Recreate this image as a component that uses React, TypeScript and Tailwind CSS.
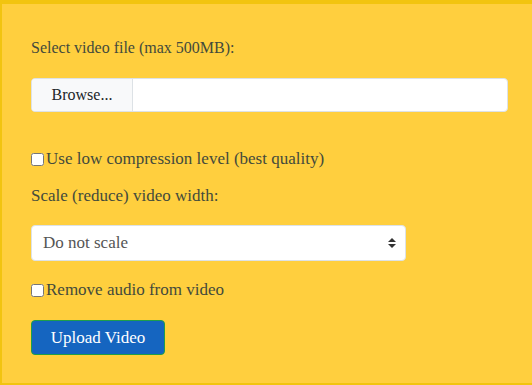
import React from "react";

export default function App() {
  const font = { fontFamily: '"Liberation Serif", "DejaVu Serif", serif' };
  return (
    <div
      className="w-[532px] h-[385px] bg-[#ffcf3e] border-t-4 border-l-2 border-b-2 border-[#f2c40f] pl-[29px] pr-[24px] text-[#434a3c] flex flex-col"
      style={font}
    >
      <div className="mt-[32px] h-[24px] leading-[24px] text-[16px]">Select video file (max 500MB):</div>
      <div className="mt-[18px] h-[34px] flex bg-white border border-[#dde2e6] rounded-[4px] overflow-hidden">
        <div className="w-[101px] h-full bg-[#f8f9fa] border-r border-[#dde2e6] flex items-center justify-center text-[16px] text-[#212529]">
          Browse...
        </div>
        <div className="flex-1" />
      </div>
      <label className="mt-[35px] h-[24px] flex items-center gap-[2px] text-[17px]">
        <input type="checkbox" className="w-[13px] h-[13px] m-0" />
        <span>Use low compression level (best quality)</span>
      </label>
      <div className="mt-[13px] h-[24px] leading-[24px] text-[17px]">Scale (reduce) video width:</div>
      <div className="mt-[17px] w-[375px] h-[36px] bg-white border border-[#dde2e6] rounded-[4px] flex items-center justify-between pl-[11px] pr-[9px] text-[17px] text-[#555]">
        <span>Do not scale</span>
        <svg width="8" height="10" viewBox="0 0 8 10">
          <path d="M4 0 L8 4 H0 Z" fill="#333" />
          <path d="M4 10 L8 6 H0 Z" fill="#333" />
        </svg>
      </div>
      <label className="mt-[17px] h-[24px] flex items-center gap-[2px] text-[17px]">
        <input type="checkbox" className="w-[13px] h-[13px] m-0" />
        <span>Remove audio from video</span>
      </label>
      <div className="mt-[18px]">
        <button className="w-[134px] h-[35px] bg-[#1565c0] border border-[#1e9e4a] rounded-[4px] text-white text-[17px]" style={font}>
          Upload Video
        </button>
      </div>
    </div>
  );
}
